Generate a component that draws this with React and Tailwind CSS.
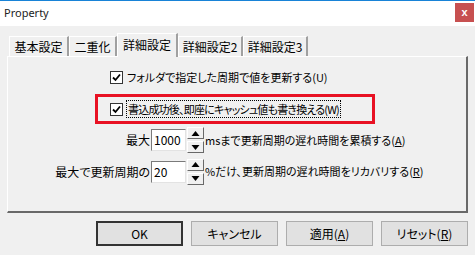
import React from "react";

const jp = "font-['Noto_Sans_CJK_JP','Noto_Sans',sans-serif] [font-feature-settings:'palt']";

const Check = () => (
  <div className="w-[13px] h-[13px] bg-white border border-[#333333] flex items-center justify-center shrink-0">
    <svg width="9" height="9" viewBox="0 0 9 9">
      <path d="M1 4.5 L3.5 7 L8 1.5" fill="none" stroke="#000" strokeWidth="1.8" />
    </svg>
  </div>
);

const Tab = ({ label, w, active }) => (
  <div
    className={
      active
        ? "h-[24px] -mb-px relative z-10 bg-[#f0f0f0] border-t border-l border-white border-r-2 border-r-[#a0a0a0] flex items-center justify-center pb-[2px]"
        : "h-[20px] bg-[#f0f0f0] border-t border-l border-white border-r-2 border-r-[#a0a0a0] flex items-center justify-center"
    }
    style={{ width: w }}
  >
    {label}
  </div>
);

const Spin = ({ value }) => (
  <div className="flex items-center gap-[1px]">
    <div className="w-[35px] h-[22px] bg-white border border-t-[#7a7a7a] border-l-[#7a7a7a] border-r-[#e3e3e3] border-b-[#e3e3e3] pl-[2px] leading-[20px]">
      {value}
    </div>
    <div className="flex flex-col gap-[2px]">
      {["M4 1 L8 6 L0 6Z", "M0 1 L8 1 L4 6Z"].map((d, i) => (
        <div
          key={i}
          className="w-[17px] h-[12px] bg-[#f0f0f0] border border-t-white border-l-white border-r-[#696969] border-b-[#696969] flex items-center justify-center"
        >
          <svg width="9" height="7" viewBox="0 0 8 7">
            <path d={d} fill="#000" />
          </svg>
        </div>
      ))}
    </div>
  </div>
);

const Btn = ({ children, def }) => (
  <div
    className={
      def
        ? "w-[87px] h-[25px] bg-[#e1e1e1] border-2 border-[#333333] flex items-center justify-center"
        : "w-[87px] h-[25px] bg-[#e1e1e1] border border-[#adadad] flex items-center justify-center"
    }
  >
    {children}
  </div>
);

export default function App() {
  return (
    <div className={`w-[475px] h-[255px] bg-[#f0f0f0] flex flex-col text-[12px] text-black overflow-hidden whitespace-nowrap ${jp}`}>
      <div className="h-[26px] shrink-0 bg-white border-t border-[#1883d7] flex justify-between">
        <span className="pl-[4px] self-center font-['Noto_Sans',sans-serif] text-[11px] text-[#222]">Property</span>
        <div className="w-[19px] h-[19px] mt-[2px] mr-[1px] bg-[#c75050] flex items-center justify-center text-white font-bold text-[11px] font-['Liberation_Sans',sans-serif]">
          x
        </div>
      </div>

      <div className="pt-[7px] px-[7px]">
        <div className="flex items-end h-[23px] pl-[2px]">
          <Tab label="基本設定" w={60} />
          <Tab label="二重化" w={48} />
          <Tab label="詳細設定" w={61} active />
          <Tab label="詳細設定2" w={65} />
          <Tab label="詳細設定3" w={65} />
        </div>

        <div className="h-[157px] w-[461px] border-t border-l border-white border-r-2 border-b-2 border-r-[#696969] border-b-[#696969] flex flex-col">
          <div className="h-[20px] mt-[10px] pl-[102px] flex items-center gap-[4px]">
            <Check />
            <span className="text-[11px]">フォルダで指定した周期で値を更新する(U)</span>
          </div>

          <div className="ml-[87px] mt-[7px] w-[280px] h-[30px] border-[3px] border-[#e81123] flex items-center pl-[12px] gap-[3px]">
            <Check />
            <span className="border border-dotted border-black h-[18px] px-[1px] flex items-center text-[11px] tracking-[-0.8px]">
              書込成功後、即座にキャッシュ値も書き換える(W)
            </span>
          </div>

          <div className="h-[26px] mt-[3px] flex items-center">
            <span className="w-[143px] text-right pr-[1px]">最大</span>
            <Spin value="1000" />
            <span className="ml-[1px] text-[11px]">
              msまで更新周期の遅れ時間を累積する(<span className="underline">A</span>)
            </span>
          </div>

          <div className="h-[27px] mt-[5px] flex items-center">
            <span className="w-[143px] text-right pr-[1px]">最大で更新周期の</span>
            <Spin value="20" />
            <span className="ml-[1px] text-[11px]">
              %だけ、更新周期の遅れ時間をリカバリする(<span className="underline">R</span>)
            </span>
          </div>
        </div>
      </div>

      <div className="mt-[8px] pr-[7px] flex justify-end gap-[8px]">
        <Btn def>OK</Btn>
        <Btn>キャンセル</Btn>
        <Btn>
          適用(<span className="underline">A</span>)
        </Btn>
        <Btn>
          リセット(<span className="underline">R</span>)
        </Btn>
      </div>
    </div>
  );
}
